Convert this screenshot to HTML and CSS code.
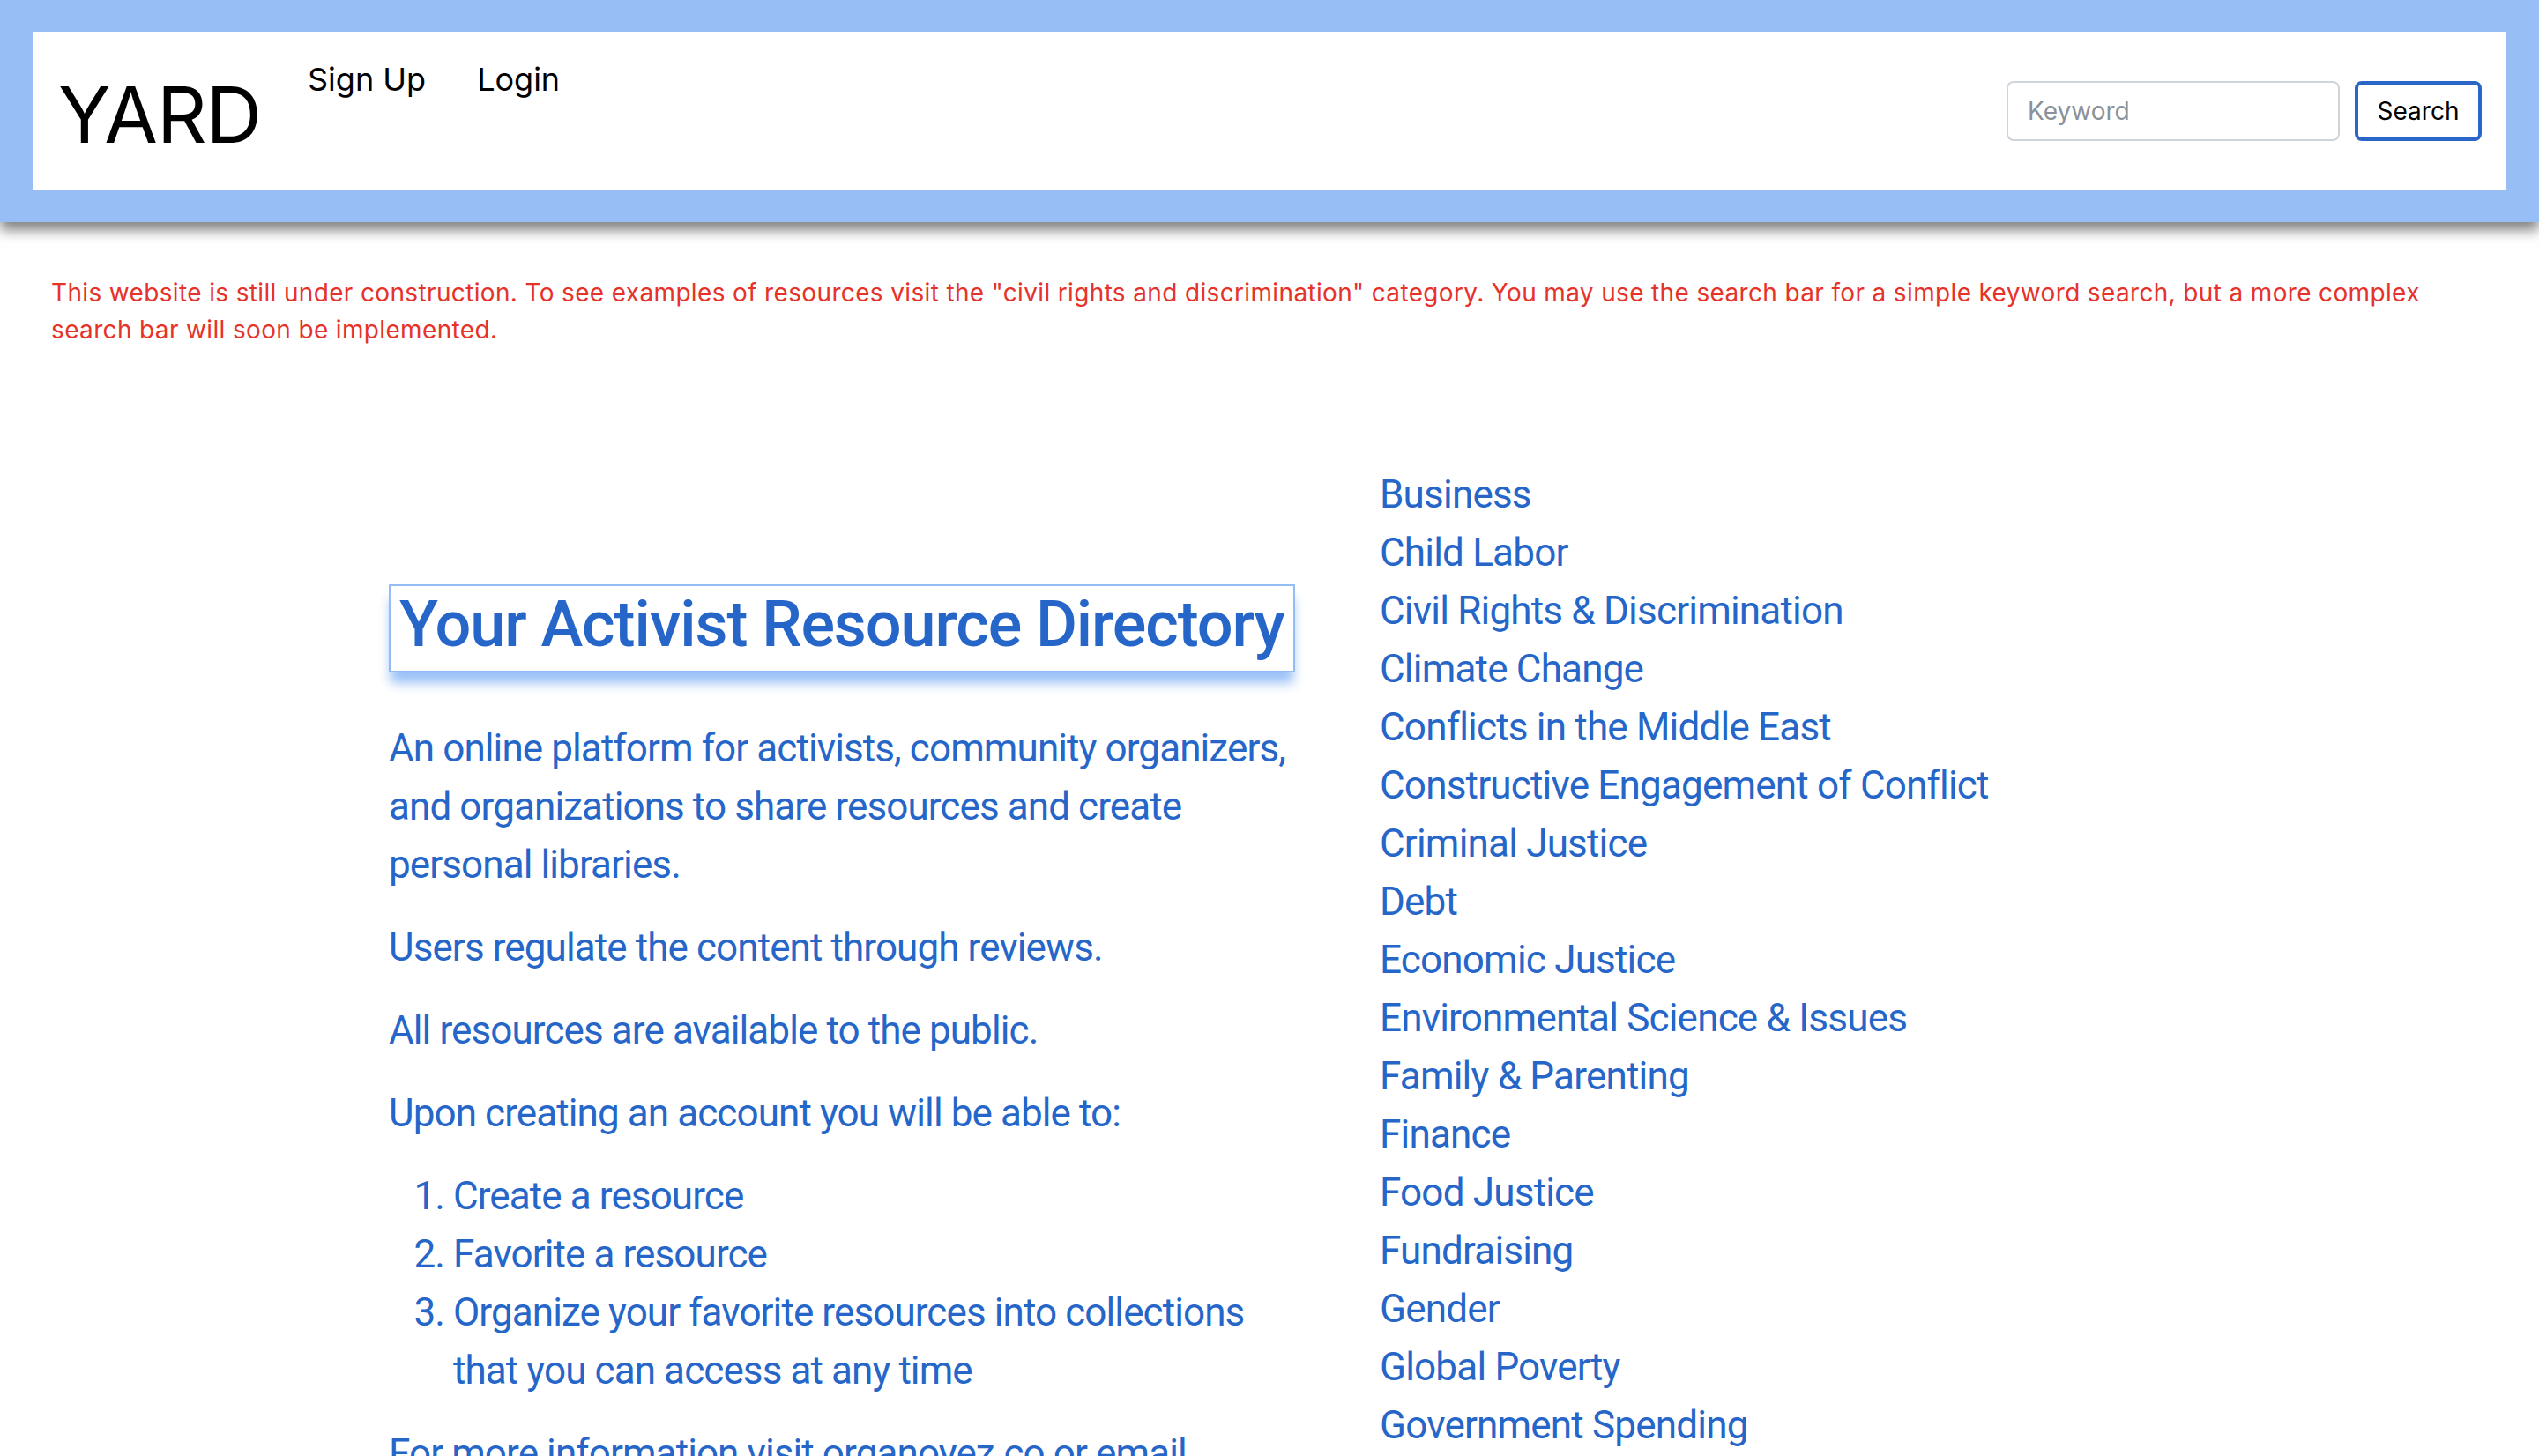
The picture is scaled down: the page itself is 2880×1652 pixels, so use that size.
FILE: index.html
```html
<!DOCTYPE html>
<html lang="en">
<head>
<meta charset="utf-8">
<title>YARD</title>
<link rel="stylesheet" href="styles.css">
</head>
<body>
<header class="site-header">
  <div class="header-inner">
    <a class="brand" href="#">YARD</a>
    <nav class="nav">
      <a class="nav-link" href="#">Sign Up</a>
      <a class="nav-link" href="#">Login</a>
    </nav>
    <form class="search-form">
      <input class="search-input" type="text" placeholder="Keyword">
      <button class="search-btn" type="button">Search</button>
    </form>
  </div>
</header>

<p class="notice">This website is still under construction. To see examples of resources visit the "civil rights and discrimination" category. You may use the search bar for a simple keyword search, but a more complex search bar will soon be implemented.</p>

<main class="main">
  <section class="intro">
    <h1 class="intro-title">Your Activist Resource Directory</h1>
    <p class="intro-text">An online platform for activists, community organizers, and organizations to share resources and create personal libraries.</p>
    <p class="intro-text">Users regulate the content through reviews.</p>
    <p class="intro-text">All resources are available to the public.</p>
    <p class="intro-text">Upon creating an account you will be able to:</p>
    <ol class="intro-list">
      <li>Create a resource</li>
      <li>Favorite a resource</li>
      <li>Organize your favorite resources into collections that you can access at any time</li>
    </ol>
    <p class="intro-text">For more information visit organoyez.co or email</p>
  </section>
  <ul class="categories">
    <li><a href="#">Business</a></li>
    <li><a href="#">Child Labor</a></li>
    <li><a href="#">Civil Rights &amp; Discrimination</a></li>
    <li><a href="#">Climate Change</a></li>
    <li><a href="#">Conflicts in the Middle East</a></li>
    <li><a href="#">Constructive Engagement of Conflict</a></li>
    <li><a href="#">Criminal Justice</a></li>
    <li><a href="#">Debt</a></li>
    <li><a href="#">Economic Justice</a></li>
    <li><a href="#">Environmental Science &amp; Issues</a></li>
    <li><a href="#">Family &amp; Parenting</a></li>
    <li><a href="#">Finance</a></li>
    <li><a href="#">Food Justice</a></li>
    <li><a href="#">Fundraising</a></li>
    <li><a href="#">Gender</a></li>
    <li><a href="#">Global Poverty</a></li>
    <li><a href="#">Government Spending</a></li>
  </ul>
</main>
</body>
</html>
```

FILE: styles.css
```css
* { box-sizing: border-box; }

html, body {
  margin: 0;
  padding: 0;
  background: #ffffff;
}

body {
  font-family: Inter, "Noto Sans", "Liberation Sans", sans-serif;
  color: #2566c8;
  overflow: hidden;
  height: 1652px;
}

a { text-decoration: none; }

.site-header {
  background: #97bff5;
  padding: 36px 37px 36px 37px;
  box-shadow: 0 9px 14px rgba(0, 0, 0, 0.5);
  position: relative;
  z-index: 2;
}

.header-inner {
  background: #ffffff;
  height: 180px;
  display: flex;
  align-items: flex-start;
}

.brand {
  width: 312px;
  padding: 50px 0 0 29px;
  font-size: 88px;
  line-height: 88px;
  color: #000000;
  font-weight: 400;
  letter-spacing: -1px;
}

.nav {
  display: flex;
  gap: 58px;
  padding-top: 27px;
}

.nav-link {
  font-size: 36px;
  line-height: 54px;
  color: #000000;
}

.search-form {
  margin-left: auto;
  margin-right: 28px;
  align-self: center;
  display: flex;
  gap: 17px;
}

.search-input {
  width: 378px;
  height: 68px;
  border: 2px solid #ced4da;
  border-radius: 8px;
  padding: 0 22px;
  font-family: inherit;
  font-size: 28px;
  color: #495057;
  outline: none;
}

.search-input::placeholder { color: #8a9198; }

.search-btn {
  width: 144px;
  height: 68px;
  border: 4px solid #2a66c8;
  border-radius: 8px;
  background: #ffffff;
  font-family: inherit;
  font-size: 28px;
  color: #000000;
  padding: 0;
}

.notice {
  margin: 59px 0 0;
  padding: 0 58px;
  font-size: 28px;
  line-height: 42px;
  letter-spacing: 0.35px;
  color: #e6332a;
}

.main {
  display: flex;
  align-items: flex-start;
  padding: 133px 0 0 441px;
  font-family: Roboto, "Noto Sans", "Liberation Sans", sans-serif;
}

.intro {
  width: 1124px;
  padding-top: 135px;
  padding-right: 90px;
}

.intro-title {
  display: inline-block;
  white-space: nowrap;
  margin: 0 0 53px;
  padding: 0 10px 8px;
  border: 2px solid #94bdf5;
  box-shadow: 0 14px 12px -2px rgba(148, 189, 245, 0.95);
  font-size: 72px;
  line-height: 88px;
  font-weight: 500;
  letter-spacing: -1.1px;
  color: #2566c8;
}

.intro-text {
  margin: 0 0 28px;
  font-size: 44px;
  line-height: 66px;
  letter-spacing: -0.9px;
}

.intro-list {
  margin: 0 0 28px;
  padding-left: 73px;
  font-size: 44px;
  line-height: 66px;
  letter-spacing: -0.9px;
}

.categories {
  list-style: none;
  margin: 0;
  padding: 0;
  font-size: 44px;
  line-height: 66px;
  letter-spacing: -0.8px;
}

.categories a { color: #2566c8; }
```
